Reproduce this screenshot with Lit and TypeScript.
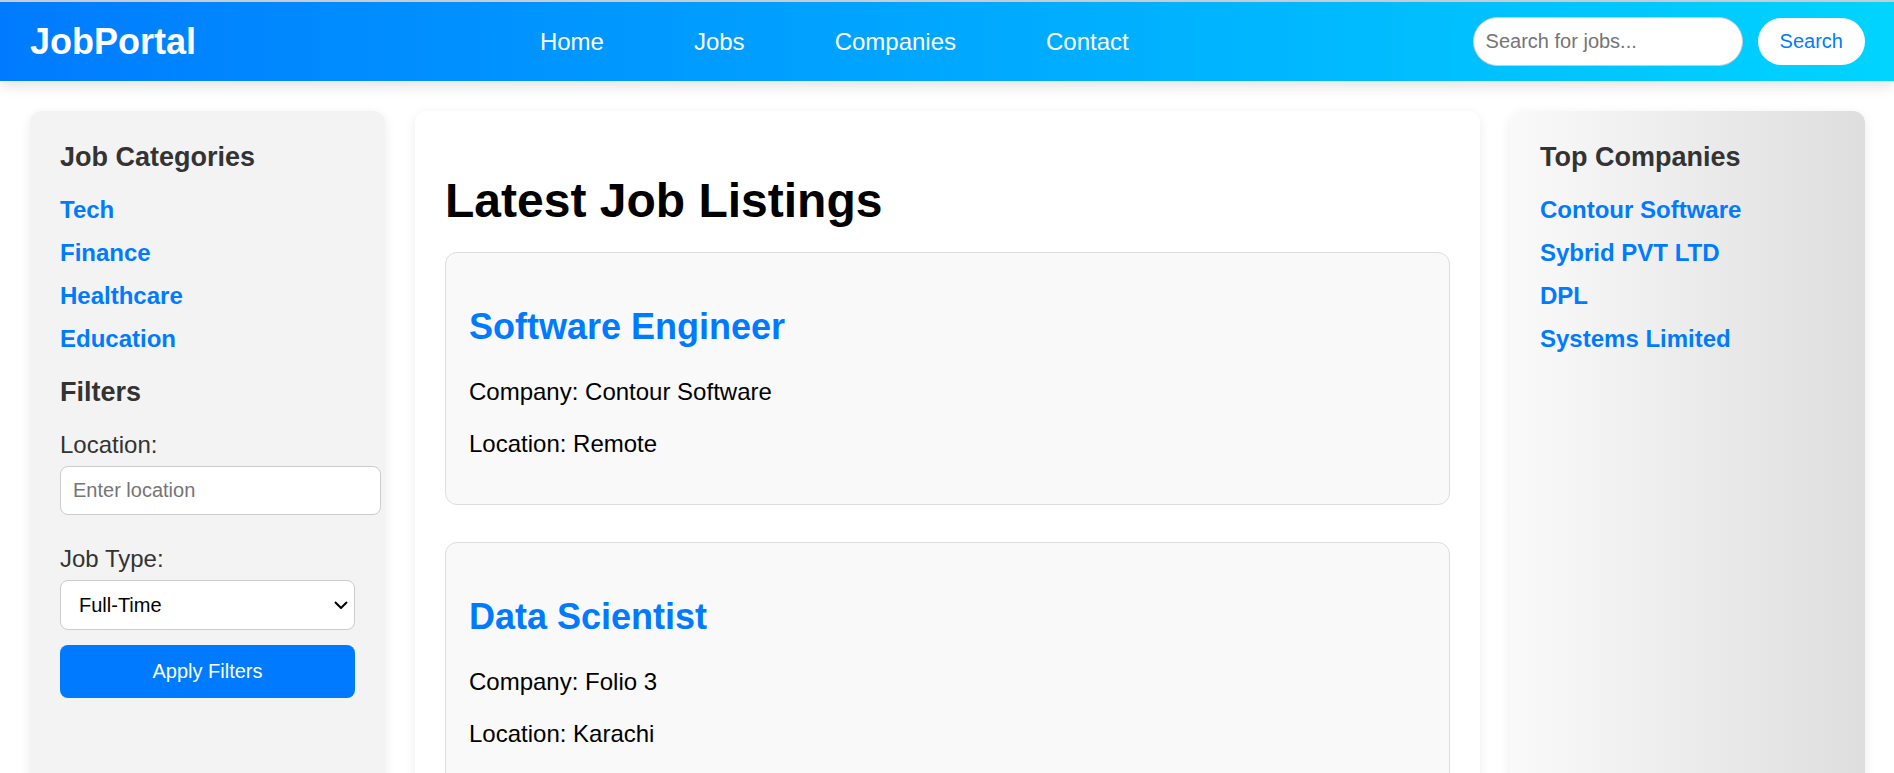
import { LitElement, html, css } from "lit";
import { customElement } from "lit/decorators.js";

interface Job {
  title: string;
  company: string;
  location: string;
}

const NAV = ["Home", "Jobs", "Companies", "Contact"];
const CATEGORIES = ["Tech", "Finance", "Healthcare", "Education"];
const COMPANIES = ["Contour Software", "Sybrid PVT LTD", "DPL", "Systems Limited"];
const JOBS: Job[] = [
  { title: "Software Engineer", company: "Contour Software", location: "Remote" },
  { title: "Data Scientist", company: "Folio 3", location: "Karachi" },
];

@customElement("app-root")
export class AppRoot extends LitElement {
  static styles = css`
    :host {
      display: block;
      background: #fff;
      color: #000;
      font-family: Arial, "Liberation Sans", sans-serif;
      font-size: 24px;
      line-height: 28px;
    }
    a {
      text-decoration: none;
    }
    input,
    select,
    button {
      font-family: inherit;
      font-size: 20px;
      line-height: 23px;
    }
    input::placeholder {
      color: #757575;
      opacity: 1;
    }

    .header {
      display: flex;
      align-items: center;
      justify-content: space-between;
      padding: 15px 29px 15px 30px;
      border-top: 2px solid #c8ccd0;
      background: linear-gradient(90deg, #007bff, #00d4ff) padding-box;
      box-shadow: 0 6px 12px rgba(0, 0, 0, 0.1);
    }
    .logo {
      color: #fff;
      font-size: 36px;
      font-weight: bold;
      line-height: 42px;
    }
    .nav {
      display: flex;
      gap: 90px;
    }
    .nav a {
      color: #fff;
    }
    .search {
      display: flex;
      align-items: center;
      gap: 15px;
    }
    .search-input {
      width: 244px;
      padding: 12px;
      border: 1px solid #ccc;
      border-radius: 30px;
      background: #fff;
    }
    .search-button {
      padding: 12px 22px;
      border: 0;
      border-radius: 30px;
      background: #fff;
      color: #007bff;
    }

    .layout {
      display: grid;
      grid-template-columns: minmax(0, 1fr) minmax(0, 3fr) minmax(0, 1fr);
      gap: 30px;
      padding: 30px 29px 30px 30px;
    }
    .panel {
      padding: 30px;
      border-radius: 12px;
      box-shadow: 0 3px 12px rgba(0, 0, 0, 0.08);
    }
    .side {
      background: #f3f3f3;
      color: #333;
    }
    .companies {
      background: linear-gradient(90deg, #fafafa, #dedede);
    }
    .side-title {
      margin: 0 0 23px;
      font-size: 27px;
      line-height: 32px;
    }
    .links {
      display: flex;
      flex-direction: column;
      gap: 15px;
      margin: 0 0 23px;
      padding: 0;
      list-style: none;
    }
    .links a {
      color: #007bff;
      font-weight: bold;
    }

    .filters {
      display: flex;
      flex-direction: column;
    }
    .field {
      display: flex;
      flex-direction: column;
      gap: 7px;
    }
    .field-input {
      width: 100%;
      margin-bottom: 30px;
      padding: 12px;
      border: 1px solid #ccc;
      border-radius: 8px;
      background: #fff;
    }
    .select-box {
      display: grid;
      align-items: center;
      margin-bottom: 15px;
    }
    .field-select,
    .select-arrow {
      grid-area: 1 / 1;
    }
    .field-select {
      width: 100%;
      height: 50px;
      padding: 12px 36px 12px 18px;
      border: 1px solid #ccc;
      border-radius: 8px;
      background: #fff;
      color: #000;
      appearance: none;
    }
    .select-arrow {
      justify-self: end;
      width: 14px;
      height: 8px;
      margin-right: 7px;
      fill: none;
      stroke: #000;
      stroke-width: 2;
      pointer-events: none;
    }
    .apply {
      padding: 15px;
      border: 0;
      border-radius: 8px;
      background: #007bff;
      color: #fff;
    }

    .page-title {
      margin: 32px 0 24px;
      font-size: 48px;
      line-height: 55px;
    }
    .jobs {
      display: flex;
      flex-direction: column;
      gap: 37px;
    }
    .job {
      padding: 0 22px 22px 23px;
      border: 1px solid #ddd;
      border-radius: 12px;
      background: #f9f9f9;
    }
    .job-title {
      margin: 53px 0 30px;
      color: #007bff;
      font-size: 36px;
      line-height: 42px;
    }
    .job-text {
      margin: 0 0 24px;
    }
  `;

  private renderLinks(items: string[]) {
    return html`<ul class="links">
      ${items.map((item) => html`<li><a href="#">${item}</a></li>`)}
    </ul>`;
  }

  render() {
    return html`
      <header class="header">
        <div class="logo">JobPortal</div>
        <nav class="nav">${NAV.map((item) => html`<a href="#">${item}</a>`)}</nav>
        <form class="search" @submit=${(e: Event) => e.preventDefault()}>
          <input class="search-input" type="text" aria-label="Search for jobs" placeholder="Search for jobs..." />
          <button class="search-button">Search</button>
        </form>
      </header>
      <div class="layout">
        <aside class="panel side">
          <h3 class="side-title">Job Categories</h3>
          ${this.renderLinks(CATEGORIES)}
          <h3 class="side-title">Filters</h3>
          <form class="filters" @submit=${(e: Event) => e.preventDefault()}>
            <div class="field">
              <label for="location">Location:</label>
              <input class="field-input" id="location" type="text" placeholder="Enter location" />
            </div>
            <div class="field">
              <label for="job-type">Job Type:</label>
              <div class="select-box">
                <select class="field-select" id="job-type">
                  <option>Full-Time</option>
                  <option>Part-Time</option>
                </select>
                <svg class="select-arrow" viewBox="0 0 14 8" aria-hidden="true">
                  <path d="M1 1 L7 7 L13 1" />
                </svg>
              </div>
            </div>
            <button class="apply">Apply Filters</button>
          </form>
        </aside>
        <main class="panel">
          <h1 class="page-title">Latest Job Listings</h1>
          <div class="jobs">
            ${JOBS.map(
              (job) => html`<article class="job">
                <h2 class="job-title">${job.title}</h2>
                <p class="job-text">Company: ${job.company}</p>
                <p class="job-text">Location: ${job.location}</p>
              </article>`
            )}
          </div>
        </main>
        <aside class="panel side companies">
          <h3 class="side-title">Top Companies</h3>
          ${this.renderLinks(COMPANIES)}
        </aside>
      </div>
    `;
  }
}
